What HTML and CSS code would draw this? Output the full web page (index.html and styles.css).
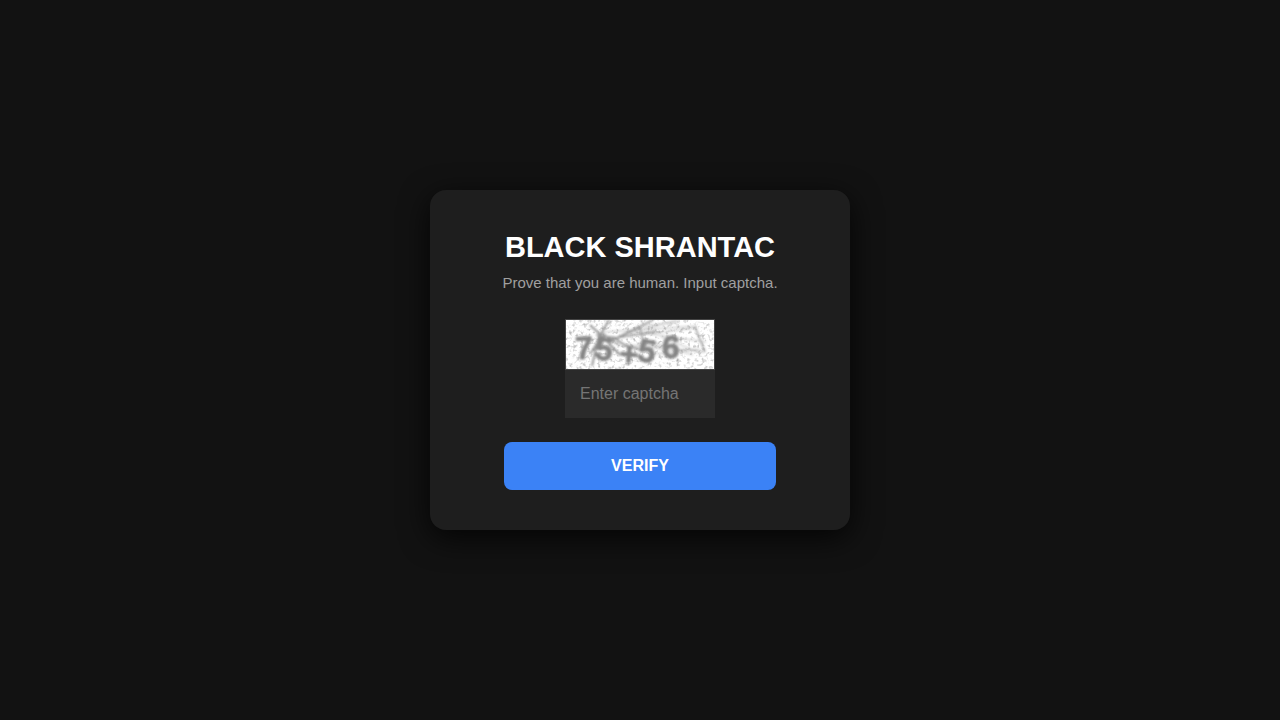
FILE: index.html
```html
<!DOCTYPE html>
<html lang="en">
<head>
<meta charset="utf-8">
<meta name="viewport" content="width=device-width, initial-scale=1">
<title>BLACK SHRANTAC</title>
<link rel="stylesheet" href="styles.css">
</head>
<body>
<main class="card">
  <h1 class="title">BLACK SHRANTAC</h1>
  <p class="subtitle">Prove that you are human. Input captcha.</p>
  <form class="form">
    <div class="captcha">
      <svg class="captcha-image" viewBox="0 0 148 49" role="img" aria-label="Captcha">
        <defs>
          <filter id="grain" x="0" y="0" width="100%" height="100%" color-interpolation-filters="sRGB">
            <feTurbulence type="fractalNoise" baseFrequency="0.28" numOctaves="2" seed="8"/>
            <feColorMatrix values="0.8 0 0 0 0.6  0.8 0 0 0 0.6  0.8 0 0 0 0.6  0 0 0 0 1"/>
          </filter>
          <filter id="soft" filterUnits="userSpaceOnUse" x="0" y="0" width="148" height="49"><feGaussianBlur stdDeviation="0.9"/></filter>
        </defs>
        <rect width="148" height="49" fill="#fff"/>
        <rect width="148" height="49" filter="url(#grain)"/>
        <g filter="url(#soft)">
          <g class="scratch">
            <path d="M24 5L37 17L54 35M43 0L32 19L26 46M24 34L36 16M47 17L60 26L73 29" stroke-width="2"/>
            <path d="M30 15L52 18L74 7L78 25M46 20L87 0M50 18L90 11M54 26L35 12" stroke-width="1.5"/>
          </g>
          <g class="scratch faint">
            <path d="M38 12L131 6M48 18L129 8M53 16L111 0M70 7L113 2M78 13L140 22M71 24L138 32M83 21L127 35M95 17L135 33M57 24L112 31M90 34L134 29"/>
            <path d="M129 7L139 32" stroke-width="1.8"/>
          </g>
          <g class="glyphs">
            <text x="18" y="39" transform="rotate(-2 18 29)">7</text>
            <text x="38" y="40" transform="rotate(8 38 30)">5</text>
            <text x="63" y="45" transform="rotate(5 63 35)">+</text>
            <text x="81" y="42" transform="rotate(10 81 31)">5</text>
            <text x="105" y="38" transform="rotate(3 105 27)">6</text>
          </g>
        </g>
      </svg>
      <input class="field" type="text" name="captcha" placeholder="Enter captcha" aria-label="Enter captcha" autocomplete="off">
    </div>
    <button class="verify" type="submit">VERIFY</button>
  </form>
</main>
</body>
</html>
```
FILE: styles.css
```css
* {
  box-sizing: border-box;
}

body {
  margin: 0;
  min-height: 100vh;
  display: flex;
  align-items: center;
  justify-content: center;
  background: #121212;
  color: #fff;
  font-family: "Liberation Sans", Arial, sans-serif;
}

.card {
  width: 100%;
  max-width: 420px;
  padding: 40px;
  border-radius: 16px;
  background: #1e1e1e;
  box-shadow: 0 8px 30px rgba(0, 0, 0, 0.8);
  text-align: center;
}

.title {
  margin: 0 0 10px;
  font-size: 29px;
  line-height: 35px;
}

.subtitle {
  margin: 0 0 28px;
  color: #a0a0a0;
  font-size: 15px;
  line-height: 16px;
}

.form {
  display: flex;
  flex-direction: column;
  align-items: center;
  gap: 24px;
}

.captcha {
  display: flex;
  flex-direction: column;
  width: 150px;
}

.captcha-image {
  display: block;
  width: 100%;
  border: 1px solid #444;
  overflow: visible;
}

.scratch {
  fill: none;
  stroke: #959595;
}

.faint {
  stroke: #a8a8a8;
  stroke-width: 0.8;
}

.glyphs {
  fill: #858585;
  stroke: #858585;
  stroke-width: 0.8;
  font-size: 32px;
  font-weight: bold;
  text-anchor: middle;
}

.field {
  width: 100%;
  height: 48px;
  padding: 0 15px;
  border: 0;
  border-radius: 0;
  background: #2a2a2a;
  color: #fff;
  font: inherit;
  font-size: 16px;
}

.field::placeholder {
  color: #757575;
}

.verify {
  width: 80%;
  height: 48px;
  border: 0;
  border-radius: 8px;
  background: #3b82f6;
  color: #fff;
  font: inherit;
  font-size: 16px;
  font-weight: bold;
  cursor: pointer;
}
```
